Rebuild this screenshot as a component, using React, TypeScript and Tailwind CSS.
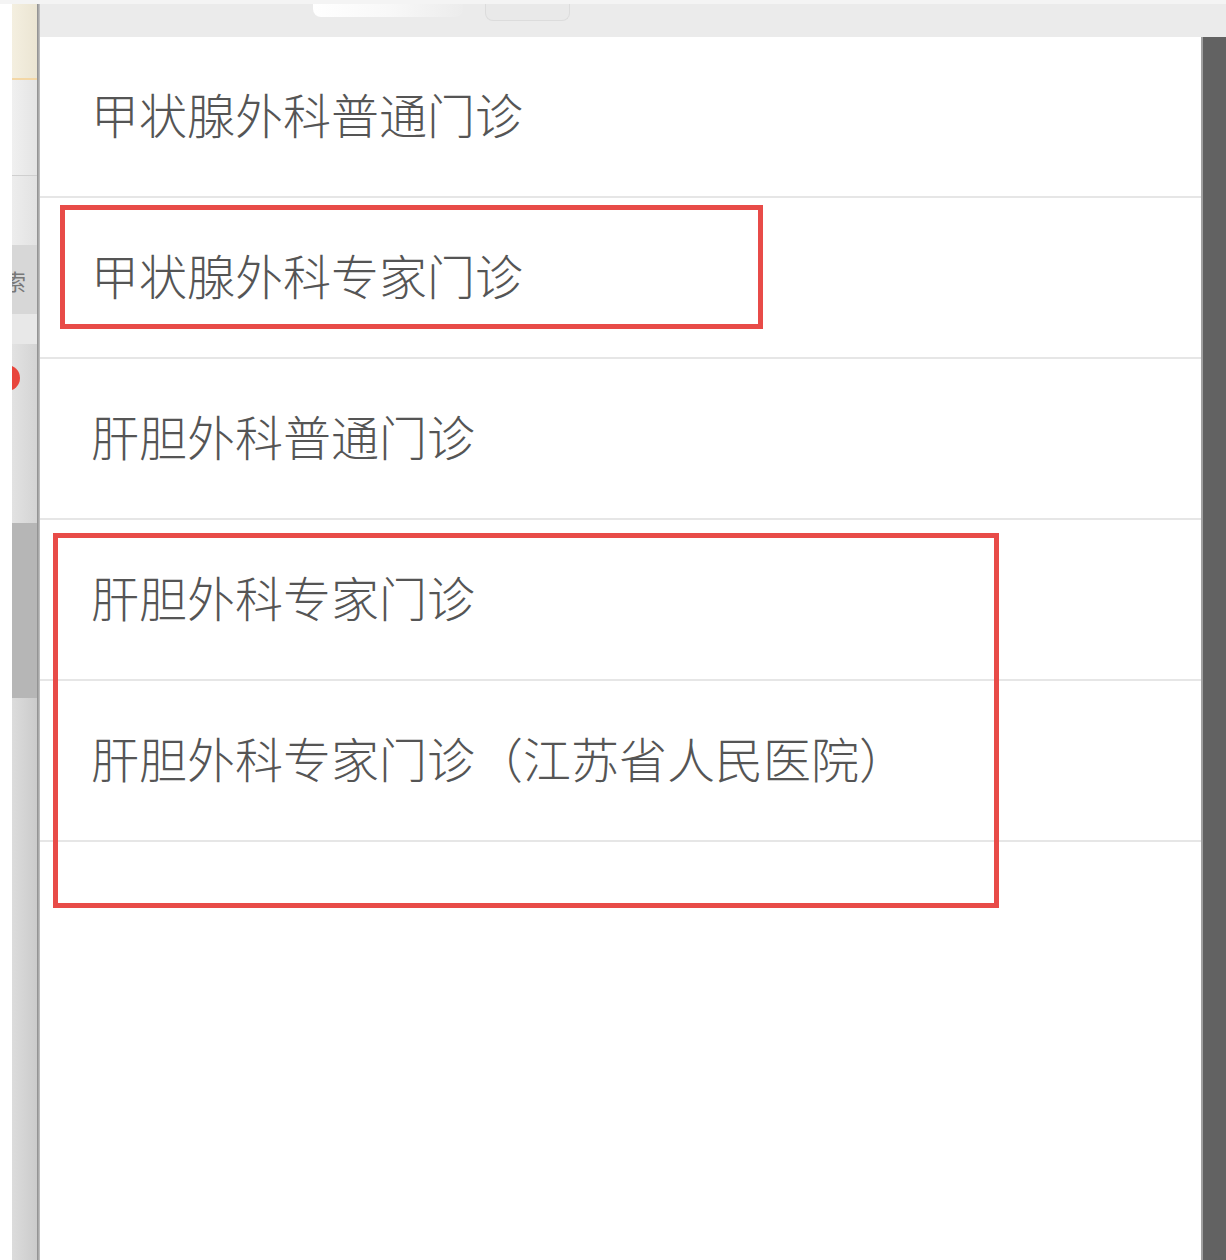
const rows = [
  "甲状腺外科普通门诊",
  "甲状腺外科专家门诊",
  "肝胆外科普通门诊",
  "肝胆外科专家门诊",
  "肝胆外科专家门诊（江苏省人民医院）",
]

function SideStrip() {
  return (
    <div className="flex w-[40px] shrink-0">
      <div className="w-[12px] bg-white" />
      <div className="flex w-[25px] flex-col">
        <div className="h-[76px] border-b-2 border-[#f3d7a6] bg-gradient-to-r from-[#f4efe0] to-[#ebe5d3]" />
        <div className="h-[96px] border-b border-[#cfcfcf] bg-gradient-to-r from-[#f0f0f0] to-[#e4e4e4]" />
        <div className="h-[69px] bg-gradient-to-r from-[#ededed] to-[#e2e2e2]" />
        <div className="flex h-[69px] items-center overflow-hidden bg-[#d7d7d7] text-[22px] leading-none text-[#777]">
          <span className="-ml-[8px]">索</span>
        </div>
        <div className="h-[30px] bg-[#e8e8e8]" />
        <div className="relative h-[179px] overflow-hidden bg-gradient-to-r from-[#e2e2e2] to-[#d4d4d4]">
          <div className="absolute -left-[18px] top-[21px] h-[26px] w-[26px] rounded-full bg-[#e8453c]" />
        </div>
        <div className="h-[175px] bg-[#b6b6b6]" />
        <div className="flex-1 bg-gradient-to-r from-[#dcdcdc] to-[#cbcbcb]" />
      </div>
      <div className="w-[3px] bg-gradient-to-r from-[#8a8a8a] to-[#c8c8c8]" />
    </div>
  )
}

export default function App() {
  return (
    <div
      className="relative flex h-[1260px] w-[1226px] flex-col overflow-hidden bg-white"
      style={{ fontFamily: '"Noto Sans CJK SC", "Noto Sans", sans-serif' }}
    >
      <div className="h-[4px] bg-[#f4f4f4]" />
      <div className="flex flex-1">
        <SideStrip />
        <div className="flex flex-1 flex-col">
          <div className="relative h-[33px] shrink-0 bg-[#ebebeb]">
            <div className="absolute left-[273px] top-0 h-[13px] w-[150px] rounded-b-[8px] bg-gradient-to-r from-white via-[#f8f8f8] to-[#ececec]" />
            <div className="absolute left-[445px] top-0 h-[17px] w-[85px] rounded-b-[8px] border border-t-0 border-[#dcdcdc] bg-[#e9e9e9]" />
          </div>
          <div className="flex flex-1">
            <div className="flex-1">
              {rows.map((label) => (
                <div
                  key={label}
                  className="flex h-[161px] items-center border-b-2 border-[#e6e6e6] pb-[8px] pl-[51px] text-[48px] font-light leading-none text-[#555]"
                >
                  {label}
                </div>
              ))}
            </div>
            <div className="w-[25px] shrink-0 border-l-2 border-[#a0a0a0] bg-[#626262]" />
          </div>
        </div>
      </div>

      <div className="pointer-events-none absolute left-[60px] top-[205px] h-[124px] w-[703px] border-[5px] border-[#e84b48]" />
      <div className="pointer-events-none absolute left-[53px] top-[533px] h-[375px] w-[946px] border-[5px] border-[#e84b48]" />
    </div>
  )
}
